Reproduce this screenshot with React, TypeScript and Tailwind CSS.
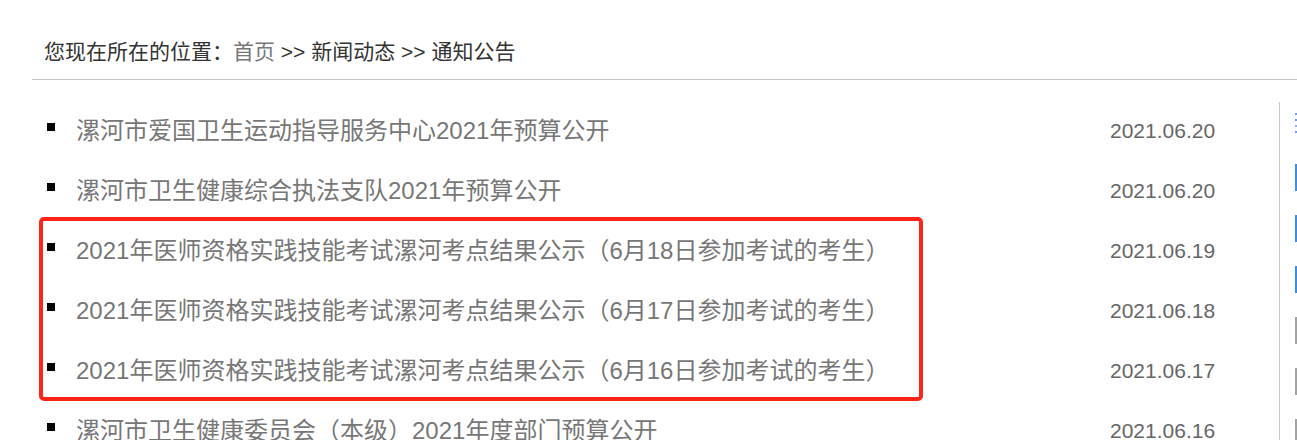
const notices = [
  { title: "漯河市爱国卫生运动指导服务中心2021年预算公开", date: "2021.06.20" },
  { title: "漯河市卫生健康综合执法支队2021年预算公开", date: "2021.06.20" },
  { title: "2021年医师资格实践技能考试漯河考点结果公示（6月18日参加考试的考生）", date: "2021.06.19" },
  { title: "2021年医师资格实践技能考试漯河考点结果公示（6月17日参加考试的考生）", date: "2021.06.18" },
  { title: "2021年医师资格实践技能考试漯河考点结果公示（6月16日参加考试的考生）", date: "2021.06.17" },
  { title: "漯河市卫生健康委员会（本级）2021年度部门预算公开", date: "2021.06.16" },
];

// left edges of the cut-off sidebar menu
const sideBars = ["blue", "blue", "blue", "gray", "gray", "gray"];

export default function App() {
  return (
    <div className="h-[440px] overflow-hidden bg-white font-['Liberation_Sans','Noto_Sans_CJK_SC',sans-serif]">
      <div className="ml-[32px]">
        {/* Breadcrumb */}
        <div className="pt-[40px] pb-[15px] pl-[12px] border-b border-[#c4c4c4] text-[21px] leading-[24px] text-[#333]">
          您现在所在的位置：<span className="text-[#777]">首页</span> &gt;&gt; 新闻动态 &gt;&gt; 通知公告
        </div>

        <div className="flex">
          {/* Notice list */}
          <div className="relative flex-1 mt-[21px]">
            {notices.map((n) => (
              <div key={n.title + n.date} className="flex items-center h-[60px]">
                <span className="w-[8px] h-[8px] bg-black mb-[8px] ml-[15px] mr-[21px] shrink-0" />
                <span className="flex-1 text-[24px] leading-[30px] text-[#777] whitespace-nowrap">{n.title}</span>
                <span className="w-[169px] shrink-0 text-[21px] text-[#666]">{n.date}</span>
              </div>
            ))}
            {/* highlight box */}
            <div className="absolute left-[7px] top-[116px] w-[884px] h-[184px] border-4 border-[#ff2418] rounded-[5px]" />
          </div>

          {/* Sidebar edge */}
          <div className="w-[18px] mt-[22px] border-l border-[#c8c8c8] h-[400px] flex flex-col items-end">
            <div className="mt-[11px] w-[2px] flex flex-col gap-[4px]">
              <span className="h-[2px] w-[2px] bg-[#6b9ef0]" />
              <span className="h-[2px] w-[2px] bg-[#6b9ef0]" />
              <span className="h-[2px] w-[2px] bg-[#8fb2f0]" />
              <span className="h-[2px] w-[2px] bg-[#6b9ef0]" />
            </div>
            <div className="mt-[31px] flex flex-col gap-[24px]">
              {sideBars.map((c, i) => (
                <span
                  key={i}
                  className={c === "blue" ? "block w-[2px] h-[27px] bg-[#3b8ee6]" : "block w-[2px] h-[27px] bg-[#a3a3a3]"}
                />
              ))}
            </div>
          </div>
        </div>
      </div>
    </div>
  );
}
